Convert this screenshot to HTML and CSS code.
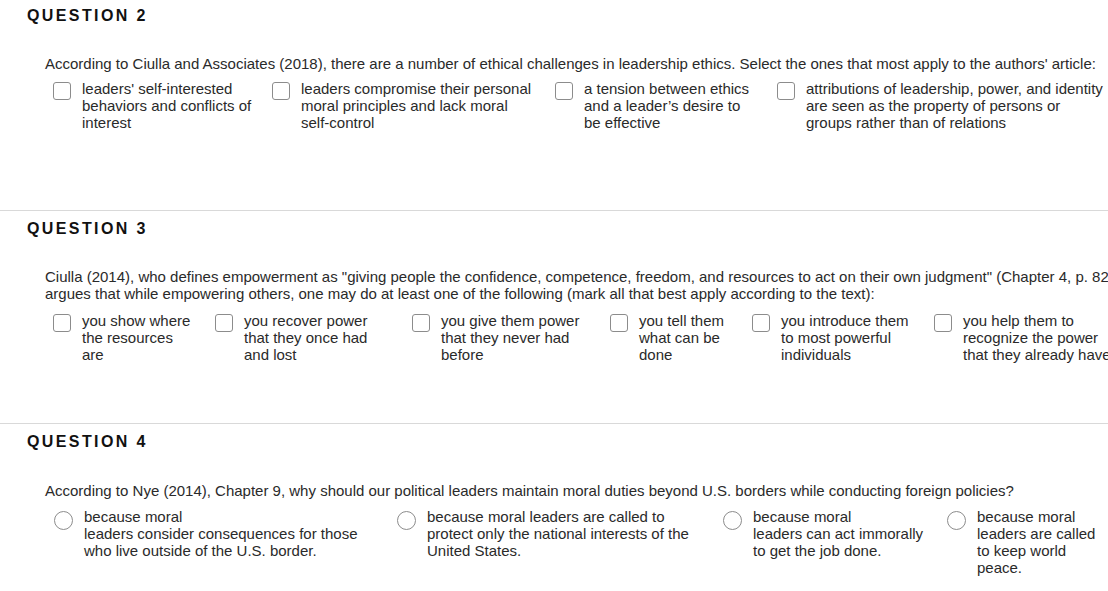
FILE: index.html
```html
<!DOCTYPE html>
<html lang="en">
<head>
<meta charset="utf-8">
<title>Questions</title>
<link rel="stylesheet" href="styles.css">
</head>
<body>
<div class="page">
  <section class="question q2">
    <h2 class="qtitle">QUESTION 2</h2>
    <p class="qtext">According to Ciulla and Associates (2018), there are a number of ethical challenges in leadership ethics. Select the ones that most apply to the authors' article:</p>
    <div class="opts">
      <label class="opt"><input type="checkbox" class="box"><span class="lbl">leaders' <span class="nw">self-interested</span> behaviors and conflicts of interest</span></label>
      <label class="opt"><input type="checkbox" class="box"><span class="lbl">leaders compromise their personal moral principles and lack moral <span class="nw">self-control</span></span></label>
      <label class="opt"><input type="checkbox" class="box"><span class="lbl">a tension between ethics and a leader’s desire to be effective</span></label>
      <label class="opt"><input type="checkbox" class="box"><span class="lbl">attributions of leadership, power, and identity are seen as the property of persons or groups rather than of relations</span></label>
    </div>
  </section>
  <section class="question q3">
    <h2 class="qtitle">QUESTION 3</h2>
    <p class="qtext">Ciulla (2014), who defines empowerment as "giving people the confidence, competence, freedom, and resources to act on their own judgment" (Chapter 4, p. 82), argues that while empowering others, one may do at least one of the following (mark all that best apply according to the text):</p>
    <div class="opts">
      <label class="opt"><input type="checkbox" class="box"><span class="lbl">you show where the resources are</span></label>
      <label class="opt"><input type="checkbox" class="box"><span class="lbl">you recover power that they once had and lost</span></label>
      <label class="opt"><input type="checkbox" class="box"><span class="lbl">you give them power that they never had before</span></label>
      <label class="opt"><input type="checkbox" class="box"><span class="lbl">you tell them what can be done</span></label>
      <label class="opt"><input type="checkbox" class="box"><span class="lbl">you introduce them to most powerful individuals</span></label>
      <label class="opt"><input type="checkbox" class="box"><span class="lbl">you help them to recognize the power that they already have</span></label>
    </div>
  </section>
  <section class="question q4">
    <h2 class="qtitle">QUESTION 4</h2>
    <p class="qtext">According to Nye (2014), Chapter 9, why should our political leaders maintain moral duties beyond U.S. borders while conducting foreign policies?</p>
    <div class="opts">
      <label class="opt"><input type="radio" name="q4" class="round"><span class="lbl">because moral<br>leaders consider consequences for those who live outside of the U.S. border.</span></label>
      <label class="opt"><input type="radio" name="q4" class="round"><span class="lbl">because moral leaders are called to protect only the national interests of the United States.</span></label>
      <label class="opt"><input type="radio" name="q4" class="round"><span class="lbl">because moral<br>leaders can act immorally to get the job done.</span></label>
      <label class="opt"><input type="radio" name="q4" class="round"><span class="lbl">because moral<br>leaders are called to keep world peace.</span></label>
    </div>
  </section>
</div>
</body>
</html>
```
FILE: styles.css
```css
html, body {
  margin: 0;
  padding: 0;
  background: #ffffff;
  overflow: hidden;
}
body {
  font-family: "Liberation Sans", Arial, sans-serif;
  font-size: 15px;
  line-height: 17px;
  color: #2a2a2a;
}
.page {
  width: 1180px;
  margin-top: -3px;
}
.question {
  border-top: 1px solid #d9d9d9;
  height: 212px;
  box-sizing: content-box;
}
.qtitle {
  margin: 0;
  padding: 9px 0 0 27px;
  font-size: 16px;
  line-height: 18px;
  font-weight: bold;
  letter-spacing: 2.4px;
  color: #111111;
}
.qtext {
  margin: 0;
  padding: 30px 0 0 45px;
  width: 1090px;
}
.opts {
  display: flex;
  align-items: flex-start;
  padding: 8px 0 0 53px;
}
.opt {
  display: flex;
  align-items: flex-start;
  gap: 11px;
  flex: none;
}
.nw {
  white-space: nowrap;
}
.box,
.round {
  -webkit-appearance: none;
  appearance: none;
  margin: 2px 0 0 0;
  flex: none;
  width: 18px;
  height: 18px;
  border: 1px solid #8c8c8c;
  border-radius: 3px;
  background: #ffffff;
  box-sizing: border-box;
}
.round {
  width: 19px;
  height: 19px;
  margin-top: 3px;
  border-radius: 50%;
}
.lbl {
  display: block;
  flex: none;
}

/* Question 2 columns */
.q2 .opt:nth-child(1) { width: 219px; }
.q2 .opt:nth-child(2) { width: 283px; }
.q2 .opt:nth-child(3) { width: 222px; }
.q2 .opt:nth-child(4) { width: 330px; }
.q2 .opt:nth-child(1) .lbl { width: 185px; }
.q2 .opt:nth-child(2) .lbl { width: 240px; }
.q2 .opt:nth-child(3) .lbl { width: 170px; }
.q2 .opt:nth-child(4) .lbl { width: 299px; }

/* Question 3 columns */
.q3 .opts { padding-top: 10px; }
.q3 .opt:nth-child(1) { width: 162px; }
.q3 .opt:nth-child(2) { width: 197px; }
.q3 .opt:nth-child(3) { width: 198px; }
.q3 .opt:nth-child(4) { width: 142px; }
.q3 .opt:nth-child(5) { width: 182px; }
.q3 .opt:nth-child(6) { width: 190px; }
.q3 .opt:nth-child(1) .lbl { width: 112px; }
.q3 .opt:nth-child(2) .lbl { width: 135px; }
.q3 .opt:nth-child(3) .lbl { width: 150px; }
.q3 .opt:nth-child(4) .lbl { width: 95px; }
.q3 .opt:nth-child(5) .lbl { width: 135px; }
.q3 .opt:nth-child(6) .lbl { width: 155px; }

/* Question 4 columns */
.q4 .qtext { padding-top: 31px; }
.q4 .opts { padding-left: 54px; padding-top: 9px; }
.q4 .opt:nth-child(1) { width: 343px; }
.q4 .opt:nth-child(2) { width: 326px; }
.q4 .opt:nth-child(3) { width: 224px; }
.q4 .opt:nth-child(4) { width: 190px; }
.q4 .opt:nth-child(1) .lbl { width: 285px; }
.q4 .opt:nth-child(2) .lbl { width: 270px; }
.q4 .opt:nth-child(3) .lbl { width: 175px; }
.q4 .opt:nth-child(4) .lbl { width: 123px; }
```
